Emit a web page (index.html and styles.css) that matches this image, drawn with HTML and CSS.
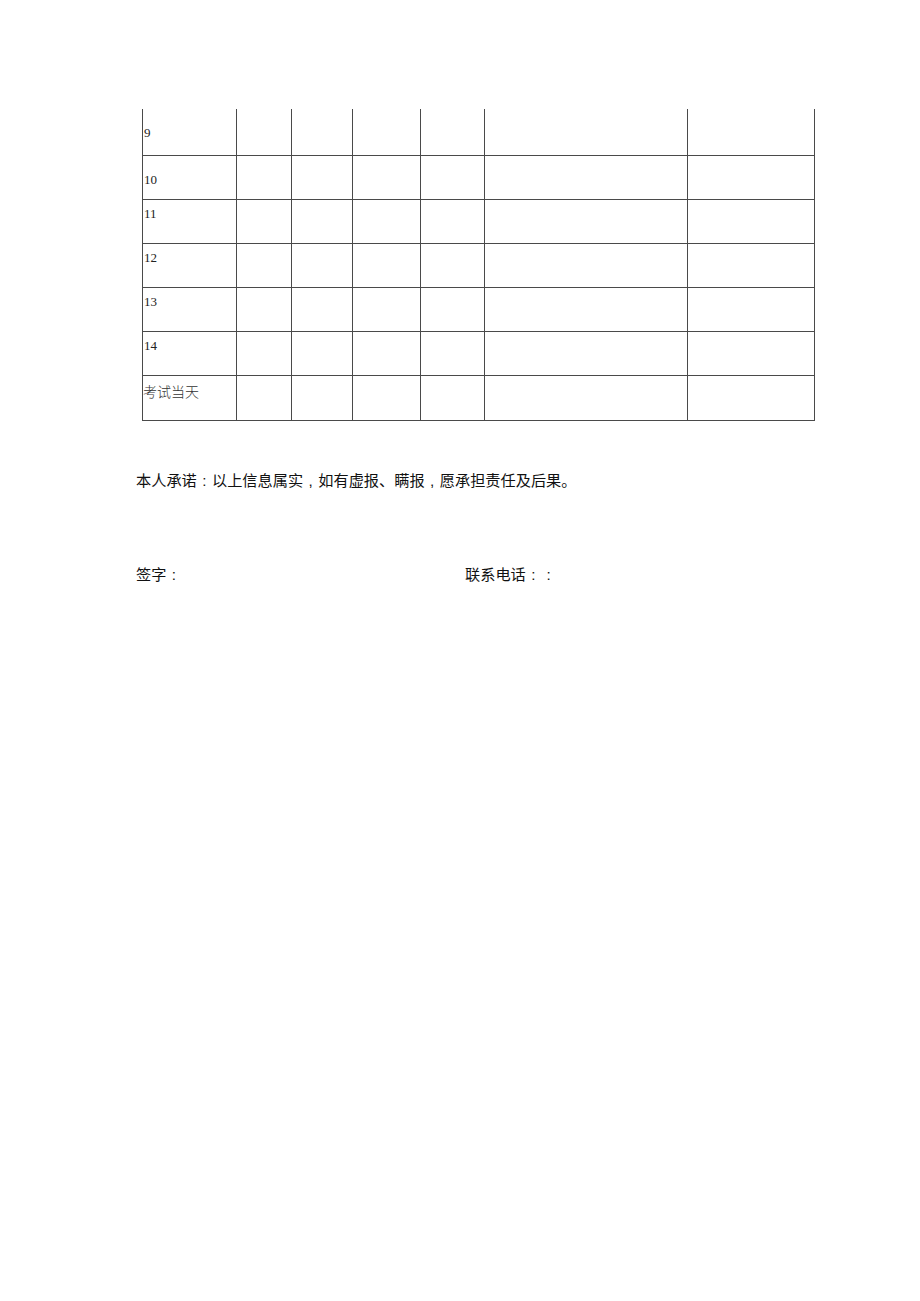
FILE: index.html
```html
<!DOCTYPE html>
<html lang="zh">
<head>
<meta charset="utf-8">
<link rel="stylesheet" href="styles.css">
</head>
<body>
<div class="page">
  <table class="grid">
    <colgroup>
      <col class="c1"><col class="c2"><col class="c3"><col class="c4"><col class="c5"><col class="c6"><col class="c7">
    </colgroup>
    <tr class="r-first"><td class="num deep">9</td><td></td><td></td><td></td><td></td><td></td><td></td></tr>
    <tr><td class="num deep">10</td><td></td><td></td><td></td><td></td><td></td><td></td></tr>
    <tr><td class="num">11</td><td></td><td></td><td></td><td></td><td></td><td></td></tr>
    <tr><td class="num">12</td><td></td><td></td><td></td><td></td><td></td><td></td></tr>
    <tr><td class="num">13</td><td></td><td></td><td></td><td></td><td></td><td></td></tr>
    <tr><td class="num">14</td><td></td><td></td><td></td><td></td><td></td><td></td></tr>
    <tr class="r-last"><td class="cn">考试当天</td><td></td><td></td><td></td><td></td><td></td><td></td></tr>
  </table>
  <p class="pledge">本人承诺<span class="p">:</span>以上信息属实<span class="p">,</span>如有虚报、瞒报<span class="p">,</span>愿承担责任及后果。</p>
  <div class="sign">
    <span class="sig">签字<span class="p">:</span></span>
    <span class="tel">联系电话<span class="p">:</span><span class="p">:</span></span>
  </div>
</div>
</body>
</html>
```
FILE: styles.css
```css
html, body {
  margin: 0;
  padding: 0;
  background: #fff;
}
.page {
  width: 920px;
  height: 1301px;
  padding-top: 109px;
  box-sizing: border-box;
}
.grid {
  margin-left: 142px;
  border-collapse: collapse;
  table-layout: fixed;
  width: 672px;
}
.c1 { width: 94px; }
.c2 { width: 55px; }
.c3 { width: 61px; }
.c4 { width: 68px; }
.c5 { width: 64px; }
.c6 { width: 203px; }
.c7 { width: 127px; }
.grid td {
  border-left: 1px solid #4a4a4a;
  border-right: 1px solid #4a4a4a;
  border-bottom: 1px solid #4a4a4a;
  height: 44px;
  padding: 0;
  vertical-align: top;
  box-sizing: border-box;
}
.grid tr.r-first td { height: 46px; }
.grid tr.r-last td { height: 45px; }
.grid td.num {
  font-family: "Liberation Serif", "Times New Roman", serif;
  font-size: 13px;
  line-height: 15px;
  color: #222;
  padding: 6px 0 0 1px;
}
.grid td.num.deep { padding-top: 16px; }
.grid td.cn {
  font-family: "Noto Sans CJK SC", serif;
  font-size: 14px;
  line-height: 16px;
  color: #333;
  font-weight: 300;
  padding: 7px 0 0 0;
}
.pledge {
  margin: 47px 0 0 136px;
  font-family: "Noto Sans CJK SC", sans-serif;
  font-size: 15.2px;
  line-height: 22px;
  color: #111;
  text-spacing-trim: space-all;
}
.sign {
  display: flex;
  margin: 70px 0 0 136px;
  font-family: "Noto Sans CJK SC", sans-serif;
  font-size: 15.2px;
  line-height: 22px;
  color: #111;
}
.p {
  display: inline-block;
  width: 1em;
  text-align: center;
  font-family: "Liberation Sans", sans-serif;
}
.sig { width: 329px; }
```
